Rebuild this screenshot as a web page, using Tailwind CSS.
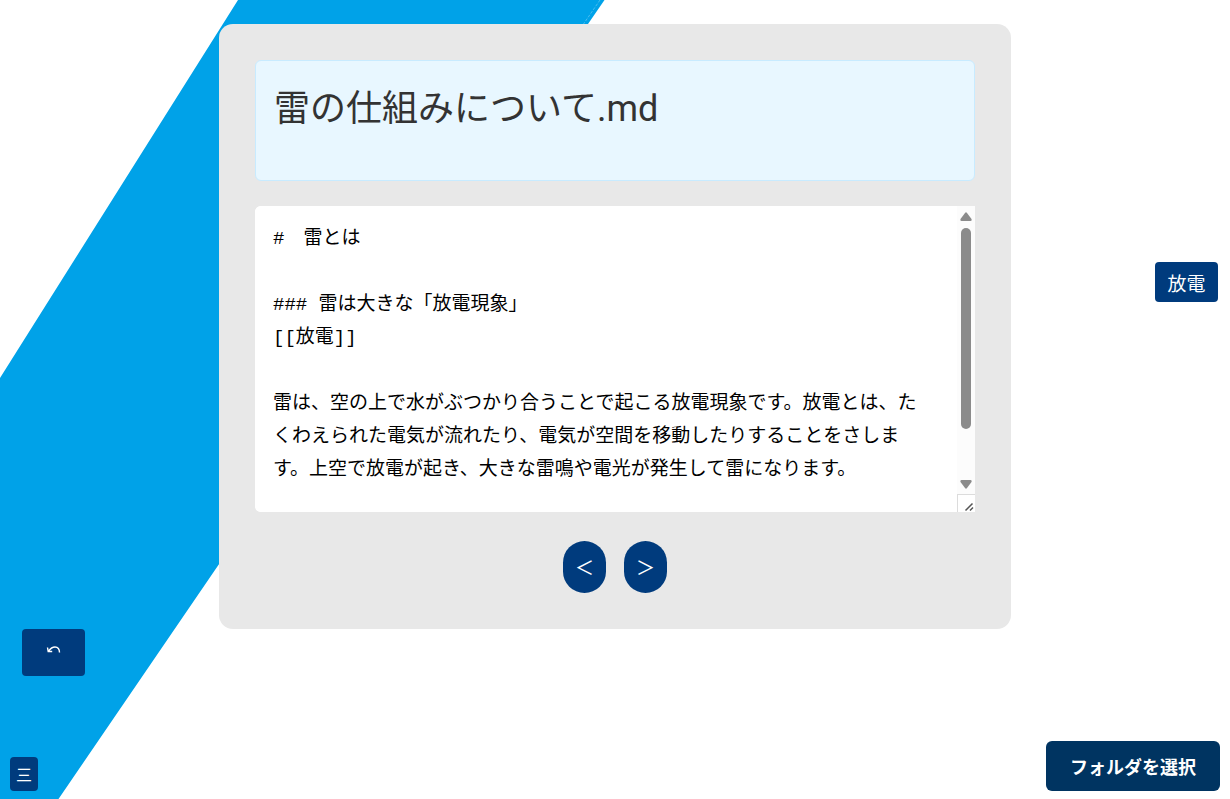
<!DOCTYPE html>
<html lang="ja">
<head>
<meta charset="utf-8">
<meta name="viewport" content="width=device-width, initial-scale=1">
<title>雷の仕組みについて.md</title>
<script src="https://cdn.jsdelivr.net/npm/@tailwindcss/browser@4"></script>
</head>
<body class="relative min-h-screen overflow-hidden bg-white font-['Noto_Sans_CJK_JP',sans-serif]">
  <!-- Lightning band behind the page -->
  <svg class="absolute inset-0 -z-10 h-full w-full" viewBox="0 0 1230 799" preserveAspectRatio="xMinYMin slice" aria-hidden="true">
    <path d="M238 0H604.500L588 24L58.500 799H0V378Z" fill="#00a2e8"/>
    <path d="M600 0L583.500 24" stroke="#5cc3f0" stroke-width=".8" stroke-dasharray="3 1.500"/>
  </svg>

  <main class="mx-auto mt-6 flex max-w-[792px] flex-col rounded-[14px] bg-[#e8e8e8] p-9">
    <input type="text" aria-label="ファイル名" value="雷の仕組みについて.md" class="h-[121px] w-full rounded-md border border-[#c8ebff] bg-[#e8f7ff] px-[18px] pb-8 font-['Roboto','Noto_Sans_CJK_JP',sans-serif] text-4xl text-[#333]">
    <div class="mt-[25px] flex h-[306px] overflow-hidden rounded-l-md bg-white">
      <textarea aria-label="本文" class="min-w-0 flex-1 resize-none overflow-hidden bg-white pt-[17px] pr-6 pl-[18px] font-['Liberation_Mono','Noto_Sans_CJK_JP',monospace] text-[19px] leading-[33px] text-black outline-none">#　雷とは

### 雷は大きな「放電現象」
[[放電]]

雷は、空の上で水がぶつかり合うことで起こる放電現象です。放電とは、たくわえられた電気が流れたり、電気が空間を移動したりすることをさします。上空で放電が起き、大きな雷鳴や電光が発生して雷になります。</textarea>
      <div class="flex w-[18px] flex-col bg-[#fcfcfc]" aria-hidden="true">
        <div class="flex flex-1 flex-col items-center pt-1.5 pb-[5px]">
          <svg class="h-[9px] w-3" viewBox="0 0 12 9"><path d="M5 1Q6 -.3 7 1L11.500 7Q12 9 10.500 9H1.500Q0 9 .5 7Z" fill="#8b8b8b"/></svg>
          <div class="mt-[7px] h-[201px] w-2.5 rounded-full bg-[#8b8b8b]"></div>
          <svg class="mt-auto h-[9px] w-3" viewBox="0 0 12 9"><path d="M5 8Q6 9.300 7 8L11.500 2Q12 0 10.500 0H1.500Q0 0 .5 2Z" fill="#8b8b8b"/></svg>
        </div>
        <svg class="h-[18px] w-[18px] border-t border-l border-[#dcdcdc] bg-white" viewBox="0 0 17 17"><path d="M7.500 15.500L14.500 8.500M12 15.500L15 12.500" stroke="#555" stroke-width="1.500"/></svg>
      </div>
    </div>
    <div class="mt-[29px] flex justify-center gap-[18px]">
      <button type="button" aria-label="前へ" class="h-[52px] w-[43px] rounded-full bg-[#003b7d] text-[19px] text-white">＜</button>
      <button type="button" aria-label="次へ" class="h-[52px] w-[43px] rounded-full bg-[#003b7d] text-[19px] text-white">＞</button>
    </div>
  </main>

  <button type="button" class="absolute top-[262px] right-3 h-10 w-[63px] rounded bg-[#003b7d] pt-0.5 text-[19px] text-white">放電</button>
  <button type="button" aria-label="元に戻す" class="absolute bottom-[123px] left-[22px] flex h-[47px] w-[63px] justify-center rounded bg-[#003b7d] pt-[17px] text-white">
    <svg class="h-2 w-[15px]" viewBox="0 0 15 8" fill="none" stroke="currentColor" stroke-width="1.400"><path d="M2.500 5.200Q5.500 1 9 1Q13.500 1 13.500 6.500M1.500 1.500L2.200 5.500L6.200 5.500"/></svg>
  </button>
  <button type="button" aria-label="メニュー" class="absolute bottom-2 left-2.5 h-[34px] w-7 rounded bg-[#003b7d] text-base text-white">三</button>
  <button type="button" class="absolute right-2.5 bottom-2 h-[50px] w-[174px] rounded-md bg-[#003461] text-lg font-bold text-white">フォルダを選択</button>
</body>
</html>
